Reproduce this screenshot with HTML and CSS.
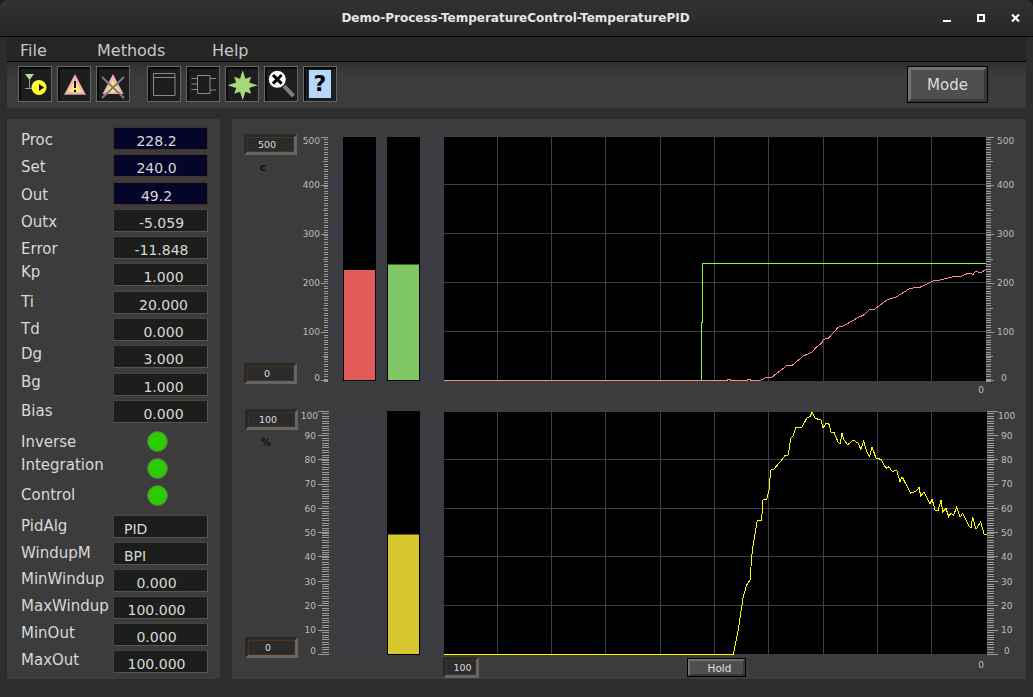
FILE: index.html
```html
<!DOCTYPE html>
<html lang="en">
<head>
    <meta charset="UTF-8">
    <title>Demo-Process-TemperatureControl-TemperaturePID</title>
    <link rel="stylesheet" href="styles.css">
</head>
<body>
    <div class="titlebar">
        <div class="title">Demo-Process-TemperatureControl-TemperaturePID</div>
        <svg class="window-buttons" width="100" height="36" viewBox="0 0 100 36">
            <path d="M12 21h8" stroke="#fff" stroke-width="2"/>
            <path d="M47 15h6v6h-6z" fill="none" stroke="#fff" stroke-width="2"/>
            <path d="M81 14.500l7 7M88 14.500l-7 7" stroke="#fff" stroke-width="2"/>
        </svg>
    </div>

    <div class="menubar">
        <span class="menu-file">File</span>
        <span class="menu-methods">Methods</span>
        <span>Help</span>
    </div>

    <div class="toolbar">
        <div class="tool-button">
            <svg viewBox="0 0 32 34">
                <path d="M6 7h9L10.500 13z" fill="#b4e08a"/>
                <path d="M10.500 13v8M6 21.500h7" stroke="#999" fill="none"/>
                <circle cx="20" cy="20.500" r="7.500" fill="#ffff33"/>
                <path d="M20 17l5 3.500-5 3.500z" fill="#111"/>
            </svg>
        </div>
        <div class="tool-button">
            <svg viewBox="0 0 32 34">
                <path d="M17 7L27.500 27h-21z" fill="#f5b0b0"/>
                <path d="M17 13l7 12H10z" fill="#ffe97f"/>
                <path d="M16 14h2v7h-2zM16 23h2v2h-2z" fill="#000"/>
                <path d="M6 27.500h22" stroke="#8a8a8a"/>
            </svg>
        </div>
        <div class="tool-button">
            <svg viewBox="0 0 32 34">
                <path d="M16 7L26.500 27h-21z" fill="#f5b0b0"/>
                <path d="M16 13l7 12H9z" fill="#ffe97f"/>
                <path d="M5 10l22 21M27 10L5 31" stroke="#7d7d7d" stroke-width="2"/>
            </svg>
        </div>
        <div class="tool-button group-start">
            <svg viewBox="0 0 32 34">
                <path d="M5.500 6.500h21.500v22H5.500zM5.500 10.500H27" fill="none" stroke="#8a8a8a"/>
            </svg>
        </div>
        <div class="tool-button">
            <svg viewBox="0 0 32 34">
                <path d="M10.500 8.500H23v18H10.500zM4.500 11.500h6M4.500 17h6M4.500 22.500h6M23 11.500h6M23 23h6" fill="none" stroke="#8a8a8a"/>
            </svg>
        </div>
        <div class="tool-button">
            <svg viewBox="0 0 32 34">
                <path d="M16.700 3.300L19.400 11.800l5.800-2-2 5.800 8.500 2.700-8.500 2.700 2 5.800-5.800-2-2.700 8.500-2.700-8.500-5.800 2 2-5.800-8.500-2.700 8.500-2.700-2-5.800 5.800 2z" fill="#a9d67c"/>
            </svg>
        </div>
        <div class="tool-button">
            <svg viewBox="0 0 32 34">
                <path d="M19 19l9.500 10" stroke="#7d7d7d" stroke-width="4"/>
                <circle cx="12.300" cy="12.300" r="9" fill="#fff" stroke="#111"/>
                <path d="M8 8l8.600 8.600M16.600 8L8 16.600" stroke="#000" stroke-width="3"/>
            </svg>
        </div>
        <div class="tool-button">
            <div class="help-icon">?</div>
        </div>
        <div class="mode-button">Mode</div>
    </div>

    <div class="main">
        <div class="param-panel">
            <div class="row"><span class="label">Proc</span><div class="value output">228.2</div></div>
            <div class="row"><span class="label">Set</span><div class="value output">240.0</div></div>
            <div class="row"><span class="label">Out</span><div class="value output">49.2</div></div>
            <div class="row"><span class="label">Outx</span><div class="value neg">-5.059</div></div>
            <div class="row"><span class="label">Error</span><div class="value neg">-11.848</div></div>
            <div class="row"><span class="label high">Kp</span><div class="value shift">1.000</div></div>
            <div class="row"><span class="label mid">Ti</span><div class="value shift">20.000</div></div>
            <div class="row"><span class="label mid">Td</span><div class="value shift">0.000</div></div>
            <div class="row"><span class="label high">Dg</span><div class="value shift">3.000</div></div>
            <div class="row"><span class="label high">Bg</span><div class="value shift">1.000</div></div>
            <div class="row"><span class="label mid">Bias</span><div class="value shift">0.000</div></div>

            <div class="led-row"><span class="label">Inverse</span><div class="led"></div></div>
            <div class="led-row"><span class="label high">Integration</span><div class="led"></div></div>
            <div class="led-row"><span class="label mid">Control</span><div class="led"></div></div>

            <div class="settings">
                <div class="row"><span class="label mid">PidAlg</span><div class="value text">PID</div></div>
                <div class="row"><span class="label mid">WindupM</span><div class="value text">BPI</div></div>
                <div class="row"><span class="label low">MinWindup</span><div class="value">0.000</div></div>
                <div class="row"><span class="label low">MaxWindup</span><div class="value">100.000</div></div>
                <div class="row"><span class="label low">MinOut</span><div class="value">0.000</div></div>
                <div class="row"><span class="label low">MaxOut</span><div class="value">100.000</div></div>
            </div>
        </div>

        <div class="trend-panel">
            <div class="trend trend-top">
                <div class="range-col">
                    <div class="range-box"><span>500</span></div>
                    <div class="unit">c</div>
                    <div class="range-box range-low"><span>0</span></div>
                </div>
                <svg class="trend-svg" width="726" height="281" viewBox="300 119 726 281">
                    <rect x="329" y="137" width="114" height="244" fill="#3b3c42"/>
                    <path class="grid" d="M329 185.500h114M329 234.500h114M329 283.500h114M329 332.500h114"/>
                    <rect x="343" y="137" width="33" height="244" fill="#000"/>
                    <rect x="387" y="137" width="33" height="244" fill="#000"/>
                    <rect x="344" y="270" width="31" height="110" fill="#e35a5a"/>
                    <rect x="388" y="264.500" width="31" height="115.500" fill="#7dc865"/>

                    <rect x="444" y="137" width="542" height="244" fill="#000"/>
                    <path class="grid" d="M443.500 136.500h543M443.500 184.500h543M443.500 233.500h543M443.500 282.500h543M443.500 331.500h543M443.500 136.500v244"/>
                    <path class="grid" d="M497.500 137v244M551.500 137v244M605.500 137v244M660.500 137v244M714.500 137v244M768.500 137v244M823.500 137v244M877.500 137v244M931.500 137v244"/>

                    <polyline class="curve" stroke="#7dff3c" points="701.500,381 701.500,322 702.500,322 702.500,263.500 986,263.500"/>
                    <polyline class="curve" stroke="#ff8a8a" points="444,380.500 726,380.500 729,379.500 732,380.500 746,380.500 749,379.500 752,380.500 760,380.700 766.700,377.300 771.700,377.300 786.700,365.700 791.700,365.700 803.300,356 811.700,352.300 816.700,346.700 821.700,343.300 823.300,339.300 828.300,338.300 838.300,327.300 843.300,326 856.700,318.300 865,314.300 870,309.300 875,309 886.700,300 896.700,296.700 910,288.300 920,287.300 935,280 940,280 953.300,276.700 960,276.700 968.300,273.300 973.300,274.300 975,271.700 981.700,272.300 986,269.300"/>

                    <line class="ruler" x1="326" y1="137" x2="326" y2="381.500" stroke-width="4" stroke-dasharray="1 1.440"/>
                    <path class="ruler" d="M320.500 137.500h7M320.500 185.500h7M320.500 234.500h7M320.500 283.500h7M320.500 332.500h7M320.500 380.500h7M323 161.500h5M323 210.500h5M323 259.500h5M323 308.500h5M323 356.500h5"/>
                    <line class="ruler" x1="988.500" y1="137" x2="988.500" y2="381.500" stroke-width="5" stroke-dasharray="1 1.440"/>
                    <path class="ruler" d="M986 137.500h8M986 185.500h8M986 234.500h8M986 283.500h8M986 332.500h8M986 380.500h8M986 161.500h6.500M986 210.500h6.500M986 259.500h6.500M986 308.500h6.500M986 356.500h6.500"/>

                    <g class="scale-left">
                        <text x="320" y="144">500</text>
                        <text x="320" y="188">400</text>
                        <text x="320" y="237">300</text>
                        <text x="320" y="286">200</text>
                        <text x="320" y="335">100</text>
                        <text x="320" y="381">0</text>
                    </g>
                    <g class="scale-right">
                        <text x="997" y="144">500</text>
                        <text x="997" y="188">400</text>
                        <text x="997" y="237">300</text>
                        <text x="997" y="286">200</text>
                        <text x="997" y="335">100</text>
                        <text x="1001" y="381">0</text>
                    </g>
                    <text class="scale-left" x="984" y="393">0</text>
                </svg>
            </div>

            <div class="trend trend-bottom">
                <div class="range-col">
                    <div class="range-box"><span>100</span></div>
                    <div class="unit">%</div>
                    <div class="range-box range-low"><span>0</span></div>
                </div>
                <div class="trend-right">
                    <svg class="trend-svg" width="726" height="256" viewBox="300 400 726 256">
                        <rect x="331" y="411" width="113" height="243" fill="#3b3c42"/>
                        <path class="grid" d="M331 459.500h113M331 508.500h113M331 556.500h113M331 605.500h113"/>
                        <rect x="387" y="411" width="33" height="244" fill="#000"/>
                        <rect x="388" y="534.500" width="31" height="119.500" fill="#d7c72e"/>

                        <rect x="444" y="411" width="543" height="244" fill="#000"/>
                        <path class="grid" d="M443.500 411.500h543M443.500 459.500h543M443.500 508.500h543M443.500 556.500h543M443.500 605.500h543M443.500 654.500h543"/>
                        <path class="grid" d="M497.500 411v243M551.500 411v243M605.500 411v243M660.500 411v243M714.500 411v243M768.500 411v243M823.500 411v243M877.500 411v243M931.500 411v243"/>

                        <polyline class="curve" stroke="#ffff00" points="444,654.500 733.300,654.500 738.300,630 740.700,613.300 743.300,596.700 746.700,585 750,580 751,566.700 752.300,550 757.300,520.700 761.700,520 762.700,500 766.700,499 769,490 770.700,470 774,469 781.700,460 785,455.700 788.300,455 790.700,438.300 792.700,436.700 796,427.300 801.700,427.300 807.300,417.300 810,416.700 812,412.300 815,418.300 821,420 823,428.300 826,423.300 828.700,423.300 831,432.300 834,432.300 838.300,442.700 840.300,443.300 842,433.300 844,440 847.700,444.700 853.300,440 858.300,443.300 860.700,449.300 863.700,441 866.700,451.700 869.700,456.700 872,446.700 876,458.300 881,459.300 886,468.300 889,466.700 892.300,471.700 896.700,470 900,481.700 902,476.700 910.700,493.300 916.700,490.700 919,487.300 920.700,496 924,492 930,504.300 932,498.700 935,510 938.300,510 941,500 942.700,511.700 946,508.300 948.700,516.700 951,512.700 953.300,515.700 956.700,507.300 960,517.300 962.700,513.300 969.300,526.700 971,527.700 972.700,516.700 976,529.300 980.700,521.700 984,534 986.700,534"/>

                        <line class="ruler" x1="325.500" y1="411" x2="325.500" y2="655" stroke-width="7" stroke-dasharray="1 1.430"/>
                        <path class="ruler" d="M318 411.500h11M318 435.500h11M318 459.500h11M318 484.500h11M318 508.500h11M318 532.500h11M318 556.500h11M318 581.500h11M318 605.500h11M318 630.500h11M318 654.500h11"/>
                        <line class="ruler" x1="990.500" y1="411" x2="990.500" y2="655" stroke-width="7" stroke-dasharray="1 1.430"/>
                        <path class="ruler" d="M987 411.500h11M987 435.500h11M987 459.500h11M987 484.500h11M987 508.500h11M987 532.500h11M987 556.500h11M987 581.500h11M987 605.500h11M987 630.500h11M987 654.500h11"/>

                        <g class="scale-left">
                            <text x="318" y="419">100</text>
                            <text x="316" y="439">90</text>
                            <text x="316" y="463">80</text>
                            <text x="316" y="487">70</text>
                            <text x="316" y="512">60</text>
                            <text x="316" y="536">50</text>
                            <text x="316" y="560">40</text>
                            <text x="316" y="585">30</text>
                            <text x="316" y="609">20</text>
                            <text x="316" y="633">10</text>
                            <text x="316" y="654">0</text>
                        </g>
                        <g class="scale-right">
                            <text x="998" y="419">100</text>
                            <text x="1001" y="439">90</text>
                            <text x="1001" y="463">80</text>
                            <text x="1001" y="487">70</text>
                            <text x="1001" y="512">60</text>
                            <text x="1001" y="536">50</text>
                            <text x="1001" y="560">40</text>
                            <text x="1001" y="585">30</text>
                            <text x="1001" y="609">20</text>
                            <text x="1001" y="633">10</text>
                            <text x="1004" y="654">0</text>
                        </g>
                    </svg>
                    <div class="trend-footer">
                        <div class="range-box range-time"><span>100</span></div>
                        <div class="hold-button">Hold</div>
                        <div class="time-zero">0</div>
                    </div>
                </div>
            </div>
        </div>
    </div>
</body>
</html>
```

FILE: styles.css
```css
html {
    background-color: #1c1c1c;
}
body {
    margin: 0;
    width: 1033px;
    height: 697px;
    overflow: hidden;
    display: flex;
    flex-direction: column;
    background-color: #2d2d2d;
    border-radius: 7px 7px 0 0;
    font-family: "DejaVu Sans", sans-serif;
    color: #d8d8d8;
}
svg {
    display: block;
}

/* window title */
.titlebar {
    height: 36px;
    flex: none;
    position: relative;
    display: flex;
    align-items: center;
    justify-content: center;
    border-bottom: 1px solid #000;
    background: linear-gradient(to bottom, #323232, #272727);
    border-radius: 7px 7px 0 0;
}
.title {
    font-size: 12px;
    font-weight: bold;
    color: #e6e6e6;
    margin: -1px 2px 0 0;
}
.window-buttons {
    position: absolute;
    top: 0;
    right: 2px;
}

/* menu + toolbar */
.menubar {
    height: 24px;
    flex: none;
    margin: 0 7px;
    padding-left: 13px;
    display: flex;
    align-items: center;
    font-size: 16px;
    color: #c8c8c8;
    background-color: #252525;
    border-bottom: 1px solid #000;
}
.menubar span {
    padding-top: 2px;
}
.menu-file {
    width: 77px;
}
.menu-methods {
    width: 115px;
}
.toolbar {
    height: 46px;
    flex: none;
    box-sizing: border-box;
    margin: 0 7px;
    padding: 4px 39px 0 11px;
    display: flex;
    align-items: flex-start;
    gap: 5px;
    background: linear-gradient(to bottom, #2f2f2f, #3c3c3c 30%);
}
.tool-button {
    width: 34px;
    height: 36px;
    box-sizing: border-box;
    flex: none;
    border: 1px solid #666;
    background-color: #1d1d1d;
    box-shadow: inset 2px 2px 0 #0a0a0a;
}
.group-start {
    margin-left: 12px;
}
.help-icon {
    width: 22px;
    height: 28px;
    margin: 3px 0 0 5px;
    background-color: #b5d8fb;
    color: #000;
    font-size: 22px;
    font-weight: bold;
    line-height: 28px;
    text-align: center;
}
.mode-button {
    margin: 1px 0 0 auto;
    width: 73px;
    height: 29px;
    display: flex;
    align-items: center;
    justify-content: center;
    font-size: 15px;
    color: #dcdcdc;
    background-color: #4f4f4f;
    border: 3px solid;
    border-color: #717171 #383838 #383838 #717171;
    box-shadow: 0 0 0 1px #000;
}

/* main area */
.main {
    flex: 1;
    display: flex;
    gap: 12px;
    padding: 11px 7px 18px;
    min-height: 0;
}
.param-panel {
    width: 199px;
    padding: 8px 0 0 14px;
    background-color: #3c3c3c;
}
.row {
    height: 27.300px;
    display: grid;
    grid-template-columns: 92px 95px;
    align-items: start;
}
.settings .row {
    height: 27px;
}
.settings {
    margin-top: 6.700px;
}
.label {
    font-size: 15px;
    line-height: 23px;
    white-space: nowrap;
    margin-top: 2px;
}
.label.mid {
    margin-top: 0;
}
.label.low {
    margin-top: -1px;
}
.label.high {
    margin-top: -2px;
}
.value {
    height: 23px;
    box-sizing: border-box;
    padding: 3px 8px 0 0;
    font-size: 14px;
    line-height: 20px;
    text-align: center;
    background-color: #1c1e1b;
    border: 1px solid #555;
    border-top-color: #444;
    border-left-color: #444;
}
.value.output {
    background-color: #05052a;
    border-color: #4a2f1c;
}
.value.shift {
    padding: 3px 0 0 6px;
}
.value.neg {
    padding: 3px 0 0 2px;
}
.value.text {
    padding: 3px 0 0 10px;
    text-align: left;
}
.led-row {
    height: 27px;
    display: grid;
    grid-template-columns: 125px 21px;
    align-items: center;
}
.led-row .label {
    margin: 4px 0 0;
}
.led-row .label.mid {
    margin: 2px 0 0;
}
.led-row .label.high {
    margin: 0 0 4px;
}
.led {
    width: 21px;
    height: 21px;
    box-sizing: border-box;
    margin: 1px 0 0 1px;
    border-radius: 50%;
    background-color: #2ccb00;
    border: 1px solid #666;
}

/* trends */
.trend-panel {
    flex: 1;
    display: flex;
    flex-direction: column;
    background-color: #3c3c3c;
}
.trend {
    display: flex;
}
.trend-top {
    height: 281px;
}
.trend-bottom {
    height: 279px;
}
.range-col {
    width: 68px;
    flex: none;
    box-sizing: border-box;
    display: flex;
    flex-direction: column;
    padding: 15px 0 16px 12px;
}
.trend-bottom .range-col {
    padding: 9px 0 21px 13px;
}
.range-box {
    width: 53px;
    height: 21px;
    box-sizing: border-box;
    border: 3px solid;
    border-color: #292929 #656565 #656565 #292929;
}
.range-box span {
    display: block;
    height: 100%;
    box-sizing: border-box;
    padding: 1px 7px 0 0;
    background-color: #2b2b2b;
    border: 1px solid #4e3218;
    font-size: 9.500px;
    line-height: 12px;
    text-align: center;
    color: #dcdcdc;
}
.range-low {
    margin-top: auto;
}
.unit {
    margin: 7px 0 0 16px;
    font-size: 10px;
    font-weight: bold;
    line-height: 12px;
    color: #111;
}
.trend-right {
    display: flex;
    flex-direction: column;
}
.grid {
    fill: none;
    stroke: #3f3d52;
    stroke-width: 1;
}
.curve {
    fill: none;
    stroke-width: 1;
    shape-rendering: crispEdges;
}
.ruler {
    fill: none;
    stroke: #9a9a9a;
    shape-rendering: crispEdges;
}
.scale-left {
    font-size: 9px;
    fill: #bcbcbc;
    text-anchor: end;
}
.scale-right {
    font-size: 9px;
    fill: #bcbcbc;
}
.trend-footer {
    display: flex;
    align-items: flex-start;
    padding: 1px 42px 0 143px;
}
.range-time {
    width: 36px;
    flex: none;
}
.range-time span {
    padding: 1px 0 0 3px;
}
.hold-button {
    margin: 2px 0 0 209px;
    width: 47px;
    height: 13px;
    padding-left: 6px;
    display: flex;
    align-items: center;
    justify-content: center;
    font-size: 10.500px;
    color: #e0e0e0;
    background-color: #4f4f4f;
    border: 2px solid;
    border-color: #717171 #383838 #383838 #717171;
    box-shadow: 0 0 0 1px #000;
}
.time-zero {
    margin: 3px 0 0 auto;
    font-size: 9px;
    color: #bcbcbc;
}
```
